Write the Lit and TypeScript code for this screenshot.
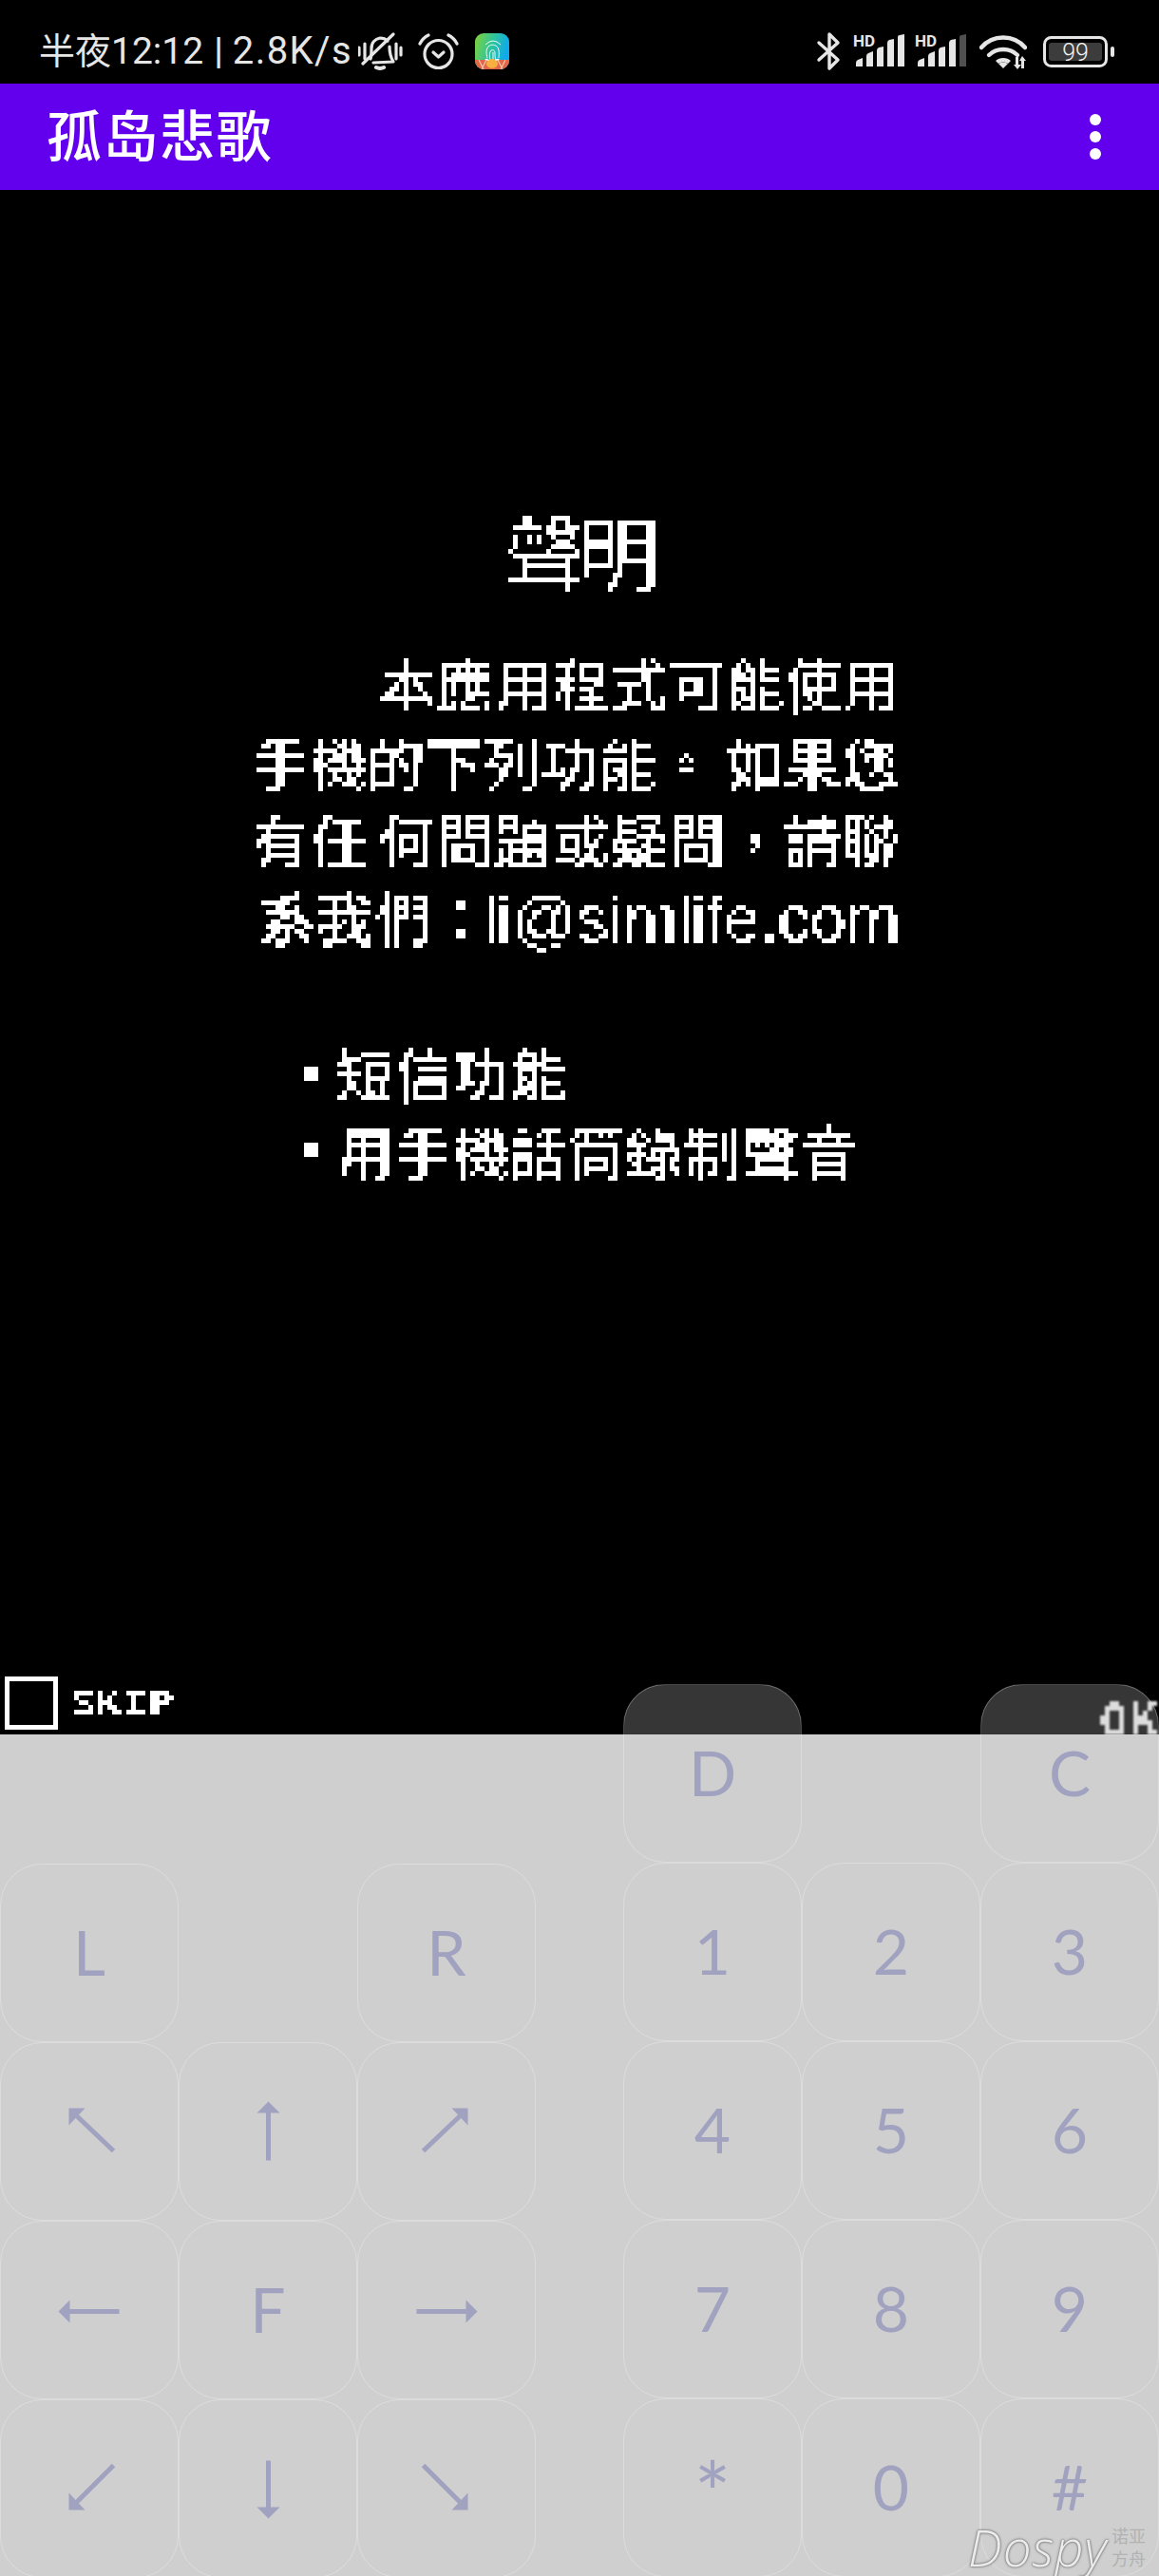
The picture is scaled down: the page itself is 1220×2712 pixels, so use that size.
import { LitElement, html, css, svg } from "lit";
import { customElement } from "lit/decorators.js";

const arrows: Record<string, any> = {
  nw: svg`<path d="M119 114L78 75"/><polygon points="72,69 72,87 89,69"/>`,
  n: svg`<path d="M94 124V72"/><polygon points="94,62 82,74 106,74"/>`,
  ne: svg`<path d="M69 114L110 75"/><polygon points="116,69 116,87 99,69"/>`,
  w: svg`<path d="M125 95H71"/><polygon points="61,95 73,83 73,107"/>`,
  e: svg`<path d="M62 95H116"/><polygon points="126,95 114,83 114,107"/>`,
  sw: svg`<path d="M119 69L78 110"/><polygon points="72,116 72,98 89,116"/>`,
  s: svg`<path d="M94 64V115"/><polygon points="94,125 82,113 106,113"/>`,
  se: svg`<path d="M69 69L110 110"/><polygon points="116,116 116,98 99,116"/>`,
};

const signal = (lastDim: boolean) => svg`
  <svg class="sig" width="54" height="36" viewBox="0 0 54 36">
    <text x="0" y="13" class="hd">HD</text>
    <path d="M3 34v-4q0-2 2-3l5-2v9z"/>
    <path d="M14 34V23q0-2 2-3l5-2v16z"/>
    <path d="M25 34V17q0-2 2-3l5-1v21z"/>
    <path d="M36 34V9q0-2 2-3l5-1v29z"/>
    <path d="M47 34V3q0-2 2-2l5-1v34z" opacity=${lastDim ? 0.35 : 1}/>
  </svg>`;

@customElement("app-root")
export class AppRoot extends LitElement {
  static styles = css`
    :host {
      display: block;
      position: relative;
      width: 1220px;
      height: 2712px;
      overflow: hidden;
      background: #000;
      font-family: "Noto Sans CJK TC", "Noto Sans", sans-serif;
    }
    .defs { position: absolute; width: 0; height: 0; }
    .status {
      display: flex;
      align-items: center;
      height: 68px;
      padding: 20px 47px 0 41px;
      color: #e6e6e6;
    }
    .status svg { display: block; flex: none; fill: #e6e6e6; }
    .clock {
      display: flex;
      font: 400 39px/68px Roboto, "Noto Sans CJK SC", sans-serif;
      white-space: nowrap;
      width: 326px;
    }
    .clock .cjk { font-size: 38px; }
    .clock .sep { margin: 0 10px 0 11px; font-weight: 500; }
    .clock .rate { font-size: 40px; letter-spacing: 1.4px; }
    .line { fill: none !important; stroke: #e6e6e6; stroke-linecap: round; stroke-linejoin: round; }
    .bell { margin-left: 10px; }
    .alarm { margin-left: 16px; }
    .appicon { margin-left: 17px; }
    .spacer { flex: 1; }
    .sig { margin-left: 11px; }
    .bt { margin-right: 1px; }
    .wifi { margin-left: 14px; }
    .batt { margin-left: 17px; }
    .hd { font: 700 17px Roboto, sans-serif; }
    .pct { font: 300 25px Roboto, sans-serif; fill: #f2f2f2; }

    .bar {
      display: flex;
      align-items: center;
      justify-content: space-between;
      height: 112px;
      padding: 0 61px 0 49px;
      background: #6200ee;
      color: #fff;
    }
    .title {
      font: 500 58px/104px "Noto Sans CJK SC", sans-serif;
      letter-spacing: 1.5px;
      margin-bottom: 8px;
    }
    .dots { display: flex; flex-direction: column; gap: 6px; }
    .dots i { display: block; width: 12px; height: 12px; border-radius: 50%; background: #fff; }

    .main {
      height: 1573px;
      color: #fff;
      box-sizing: border-box;
      padding-top: 328px;
    }
    .px { filter: url(#px); }
    .h {
      font-size: 86px;
      line-height: 100px;
      letter-spacing: -8px;
      padding-left: 531px;
      height: 100px;
      font-weight: 400;
    }
    .p { margin-top: 50px; padding-left: 265px; font-size: 60px; letter-spacing: 1px; line-height: 82px; font-weight: 500; }
    .p div { height: 82px; white-space: pre; }
    .p .first { padding-left: 134px; }
    .p .last { padding-left: 7px; }
    .p .g { display: inline-block; width: 11px; }
    .latin { font-family: "Liberation Sans", sans-serif; font-weight: 400; letter-spacing: 0; font-size: 68px; margin-left: -8px; }
    .list { margin-top: 82px; font-size: 60px; letter-spacing: 1px; line-height: 82px; font-weight: 500; }
    .list div { display: flex; align-items: center; height: 82px; padding-left: 320px; }
    .list i { display: block; width: 15px; height: 15px; background: #fff; margin-right: 19px; }

    .pad {
      display: flex;
      justify-content: space-between;
      height: 941px;
      background: linear-gradient(#000 53px, #cfcfcf 53px);
    }
    .left { display: flex; flex-direction: column; width: 564px; }
    .right { width: 564px; }
    .skip { display: flex; align-items: center; margin: -8px 0 0 5px; height: 56px; }
    .box { width: 56px; height: 56px; box-sizing: border-box; border: 5px solid #fff; }
    .skiptext {
      margin-left: 12px;
      width: 124px;
      color: #fff;
      font: 700 36px/56px "DejaVu Sans Mono", monospace;
    }
    .skiptext span { display: inline-block; transform: scaleX(1.27); transform-origin: left center; }
    .grid { display: grid; grid-template-columns: repeat(3, 188px); grid-auto-rows: 188px; }
    .left .grid { margin-top: auto; }
    .key {
      box-sizing: border-box;
      display: flex;
      align-items: center;
      justify-content: center;
      padding-bottom: 3px;
      border: 1.5px solid rgba(255, 255, 255, 0.28);
      border-radius: 44px;
      color: #a0a2c0;
      font: 400 66px/1 Lato, sans-serif;
    }
    .key.arrow { padding: 0; }
    .key.star { font-size: 92px; padding: 8px 0 0; }
    .key.over { background: linear-gradient(#363636 52px, transparent 52px) no-repeat; }
    .blank { border: none; background: none; }
    .key svg { display: block; fill: #a0a2c0; stroke: #a0a2c0; stroke-width: 5; }
    .key svg polygon { stroke: none; }

    .ok {
      position: absolute;
      right: 0;
      top: 1786px;
      width: 62px;
      height: 40px;
      overflow: hidden;
      filter: blur(1.2px);
    }
    .ok span {
      display: block;
      width: 80px;
      height: 50px;
      color: #ddd;
      font: 700 48px/50px "DejaVu Sans Mono", monospace;
      letter-spacing: 3px;
      filter: url(#px);
    }
    .mark {
      position: absolute;
      left: 1019px;
      top: 2657px;
      display: flex;
      align-items: flex-start;
    }
    .dospy {
      width: 151px;
      font: italic 300 53px/50px "Open Sans", sans-serif;
      letter-spacing: 1px;
      color: #ececec;
      text-shadow: 0 0 3px #6f6f6f, 0 0 2px #6f6f6f;
    }
    .cn {
      width: 38px;
      font: 400 18px/24px "Noto Sans CJK SC", sans-serif;
      color: #b2b2b2;
    }
  `;

  key(label: string, over = false) {
    const arrow = arrows[label];
    return html`<div class="key ${over ? "over" : ""} ${label === "*" ? "star" : ""} ${arrow ? "arrow" : ""}">
      ${arrow ? html`<svg width="185" height="185" viewBox="1.5 1.5 185 185">${arrow}</svg>` : label}
    </div>`;
  }

  render() {
    return html`
      <svg class="defs" aria-hidden="true">
        <filter id="px" x="0" y="0" width="100%" height="100%" primitiveUnits="userSpaceOnUse" color-interpolation-filters="sRGB">
          <feFlood x="2" y="2" width="1" height="1" flood-color="#fff"/>
          <feComposite x="0" y="0" width="5" height="5"/>
          <feTile result="grid"/>
          <feComposite in="SourceGraphic" in2="grid" operator="in"/>
          <feMorphology operator="dilate" radius="2"/>
          <feComponentTransfer>
            <feFuncA type="discrete" tableValues="0 0 1 1"/>
          </feComponentTransfer>
        </filter>
      </svg>

      <div class="status">
        <div class="clock"><span class="cjk">半夜</span><span>12:12</span><span class="sep">|</span><span class="rate">2.8K/s</span></div>
        <svg class="bell line" width="47" height="40" viewBox="0 0 47 40" stroke-width="3.2">
          <path d="M1 16v8M7 12v16M40 12v16M45 16v8"/>
          <path d="M5 33L37 2"/>
          <path d="M13 28c1-3 1-7 1-11 0-6 4-10 9-11 3 0 6 1 8 3M33 15c0 6 1 11 4 16l-21 1"/>
          <path d="M19 37q4 2 8 0" stroke-width="4"/>
        </svg>
        <svg class="alarm line" width="43" height="39" viewBox="0 0 43 39" stroke-width="3.2">
          <circle cx="21.5" cy="22" r="14.5"/>
          <path d="M2 11q3-6 9-9M32 2q6 3 9 9"/>
          <path d="M16 20l5.5 5 5.5-5"/>
        </svg>
        <svg class="appicon" width="36" height="38" viewBox="0 0 36 38">
          <defs>
            <linearGradient id="ai" x1="0" y1="0" x2="1" y2="0.3">
              <stop offset="0" stop-color="#86d233"/>
              <stop offset="0.55" stop-color="#2cc4a0"/>
              <stop offset="1" stop-color="#0fa9ee"/>
            </linearGradient>
            <clipPath id="ac"><rect width="36" height="38" rx="9"/></clipPath>
          </defs>
          <g clip-path="url(#ac)">
            <rect width="36" height="38" fill="url(#ai)"/>
            <g fill="none" stroke="#e9fbf2" stroke-width="1">
              <path d="M11 12q8-8 16 0"/><path d="M13 26c-1-4-2-8 1-12 3-3 8-2 10 1 2 4 1 8 1 11"/>
              <path d="M16 28c-1-4-1-8 1-10 2-1 4 0 4 3 0 3 0 5 1 7"/><path d="M19 20v8"/>
            </g>
            <rect y="28" width="36" height="10" fill="#e4664a"/>
            <path d="M4 28l5 10M12 28l-5 10M24 28l5 10M32 28l-5 10" stroke="#f6c9a8" stroke-width="1.2" fill="none"/>
            <ellipse cx="18" cy="32" rx="6" ry="5" fill="#f5b041"/>
            <path d="M10 28q3-3 5 1M26 28q-3-3-5 1" fill="#fff"/>
          </g>
        </svg>
        <div class="spacer"></div>
        <svg class="bt line" width="27" height="42" viewBox="0 0 27 42" stroke-width="3.4">
          <path d="M3 12l20 18-9 9V3l9 9L3 30"/>
        </svg>
        ${signal(false)} ${signal(true)}
        <svg class="wifi" width="50" height="37" viewBox="0 0 50 37">
          <g class="line" fill="none" stroke-width="4.4" stroke-linecap="butt">
            <path d="M2 14C14 0 36 0 48 14"/>
            <path d="M10 22c8-8 22-8 30 0"/>
          </g>
          <path d="M17 28c4-4 12-4 16 0l-3 3c-3-2-7-2-10 0z"/>
          <path d="M20 31q5-3 10 0l-5 5z"/>
          <path d="M38 24h3v8h3l-4 5-4-5h2zM44 36v-8h-2l3-5 4 5h-2v8z"/>
        </svg>
        <svg class="batt" width="75" height="33" viewBox="0 0 75 33">
          <rect x="1.5" y="1.5" width="65" height="30" rx="7" fill="none" stroke="#e6e6e6" stroke-width="3"/>
          <rect x="6" y="7" width="56" height="19" rx="3" fill="#3c3c3c"/>
          <text x="34" y="26" text-anchor="middle" class="pct">99</text>
          <rect x="71" y="11" width="4" height="11" rx="2"/>
        </svg>
      </div>

      <div class="bar">
        <div class="title">孤岛悲歌</div>
        <div class="dots"><i></i><i></i><i></i></div>
      </div>

      <div class="main">
        <div class="h px">聲明</div>
        <div class="p px">
          <div class="first">本應用程式可能使用</div>
          <div>手機的下列功能。<span class="g"></span>如果您</div>
          <div>有任<span class="g"></span>何問題或疑問，請聯</div>
          <div class="last">系我們：<span class="latin">li@simlife.com</span></div>
        </div>
        <div class="list px">
          <div><i></i>短信功能</div>
          <div><i></i>用手機話筒錄制聲音</div>
        </div>
      </div>

      <div class="pad">
        <div class="left">
          <div class="skip">
            <div class="box"></div>
            <div class="skiptext px"><span>SKIP</span></div>
          </div>
          <div class="grid">
            ${this.key("L")}<div class="blank"></div>${this.key("R")}
            ${this.key("nw")}${this.key("n")}${this.key("ne")}
            ${this.key("w")}${this.key("F")}${this.key("e")}
            ${this.key("sw")}${this.key("s")}${this.key("se")}
          </div>
        </div>
        <div class="right">
          <div class="grid">
            ${this.key("D", true)}<div class="blank"></div>${this.key("C", true)}
            ${this.key("1")}${this.key("2")}${this.key("3")}
            ${this.key("4")}${this.key("5")}${this.key("6")}
            ${this.key("7")}${this.key("8")}${this.key("9")}
            ${this.key("*")}${this.key("0")}${this.key("#")}
          </div>
        </div>
      </div>

      <div class="ok"><span>OK</span></div>
      <div class="mark">
        <div class="dospy">Dospy</div>
        <div class="cn">诺亚<br />方舟</div>
      </div>
    `;
  }
}
